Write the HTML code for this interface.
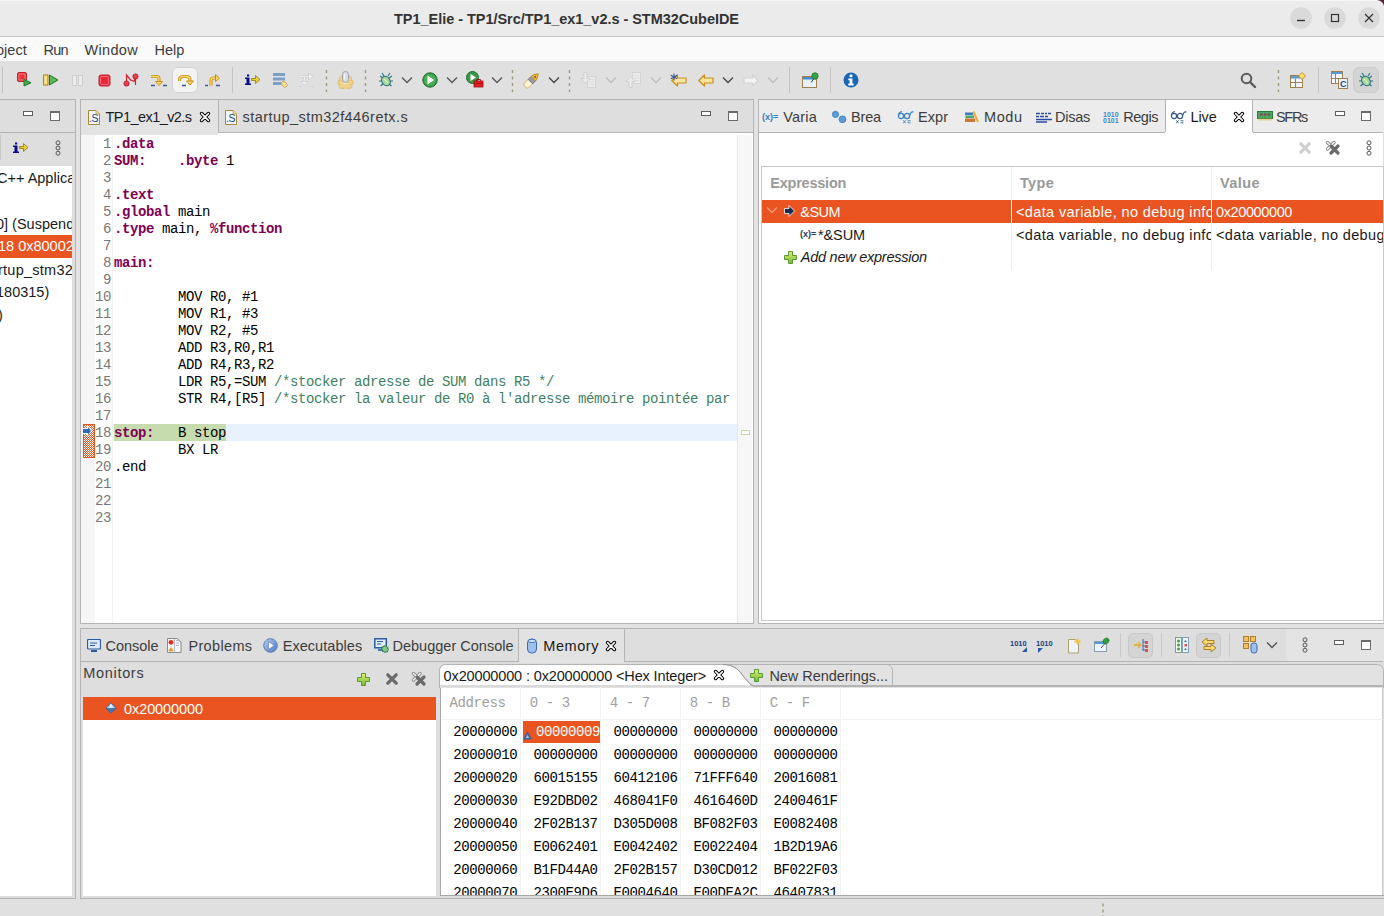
<!DOCTYPE html><html><head><meta charset="utf-8"><style>
html,body{margin:0;padding:0;width:1384px;height:916px;overflow:hidden;background:#e2e2e2}
div{position:absolute;box-sizing:border-box}
body{position:relative;font-family:"Liberation Sans",sans-serif}
</style></head><body>
<div style="left:0px;top:0px;width:1384px;height:916px;background:#e2e2e2"></div>
<div style="left:0px;top:0px;width:1384px;height:36px;background:#ebebeb"></div>
<div style="left:0px;top:36px;width:1384px;height:1px;background:#c4c4c4"></div>
<div style="left:394px;top:9.18px;font-size:14.5px;line-height:20px;color:#333;font-family:'Liberation Sans', sans-serif;white-space:pre;font-weight:bold;letter-spacing:-0.034px;">TP1_Elie - TP1/Src/TP1_ex1_v2.s - STM32CubeIDE</div>
<svg style="position:absolute;left:1290px;top:7px" width="22" height="22" viewBox="0 0 22 22"><circle cx="11" cy="11" r="10.8" fill="#dadada"/><path d="M7 13.5h8" stroke="#333" stroke-width="1.4"/></svg>
<svg style="position:absolute;left:1324px;top:7px" width="22" height="22" viewBox="0 0 22 22"><circle cx="11" cy="11" r="10.8" fill="#dadada"/><rect x="7.5" y="7.5" width="7" height="7" fill="none" stroke="#333" stroke-width="1.2"/></svg>
<svg style="position:absolute;left:1358px;top:7px" width="22" height="22" viewBox="0 0 22 22"><circle cx="11" cy="11" r="10.8" fill="#dadada"/><path d="M7 7l8 8M15 7l-8 8" stroke="#333" stroke-width="1.2"/></svg>
<div style="left:0px;top:0px;width:1384px;height:1px;background:#f6f6f6"></div>
<svg style="position:absolute;left:1374px;top:0px" width="10" height="10" viewBox="0 0 10 10"><path d="M3 0H10V6Q9 1.2 3 0Z" fill="#5e1e40"/></svg>
<div style="left:0px;top:37px;width:1384px;height:24px;background:#fafafa"></div>
<div style="left:-4px;top:39.78px;font-size:14.5px;line-height:20px;color:#3c3c3c;font-family:'Liberation Sans', sans-serif;white-space:pre;letter-spacing:0.015px;">oject</div>
<div style="left:43.4px;top:39.78px;font-size:14.5px;line-height:20px;color:#3c3c3c;font-family:'Liberation Sans', sans-serif;white-space:pre;letter-spacing:-0.698px;">Run</div>
<div style="left:84.5px;top:39.78px;font-size:14.5px;line-height:20px;color:#3c3c3c;font-family:'Liberation Sans', sans-serif;white-space:pre;letter-spacing:0.323px;">Window</div>
<div style="left:154.6px;top:39.78px;font-size:14.5px;line-height:20px;color:#3c3c3c;font-family:'Liberation Sans', sans-serif;white-space:pre;letter-spacing:-0.053px;">Help</div>
<div style="left:0px;top:61px;width:1384px;height:38px;background:#e0e0e0"></div>
<div style="left:-2px;top:99px;width:78px;height:800px;background:#dedede;border:1px solid #b4b4b4;box-sizing:border-box"></div>
<div style="left:0px;top:132px;width:75px;height:1px;background:#b4b4b4"></div>
<div style="left:0px;top:166px;width:72px;height:730px;background:#fff"></div>
<div style="left:80px;top:99px;width:674px;height:525px;background:#dedede;border:1px solid #b4b4b4;box-sizing:border-box"></div>
<div style="left:81px;top:132px;width:672px;height:1px;background:#b4b4b4"></div>
<div style="left:81px;top:133px;width:672px;height:490px;background:#fff"></div>
<div style="left:758px;top:99px;width:628px;height:525px;background:#dedede;border:1px solid #b4b4b4;box-sizing:border-box"></div>
<div style="left:759px;top:132px;width:624px;height:1px;background:#b4b4b4"></div>
<div style="left:759px;top:133px;width:624px;height:490px;background:#fff"></div>
<div style="left:80px;top:628px;width:1306px;height:271px;background:#dedede;border:1px solid #b4b4b4;box-sizing:border-box"></div>
<div style="left:81px;top:661px;width:1302px;height:1px;background:#b4b4b4"></div>
<div style="left:81px;top:100px;width:137px;height:35px;background:#e3e3e3"></div>
<div style="left:218px;top:100px;width:1px;height:33px;background:#b4b4b4"></div>
<div style="left:219px;top:132px;width:534px;height:1px;background:#b4b4b4"></div>
<div style="left:81px;top:135px;width:672px;height:488px;background:#fff"></div>
<svg style="position:absolute;left:88px;top:110px" width="12" height="15" viewBox="0 0 12 15"><path d="M0.5 0.5H8L11.5 4V14.5H0.5Z" fill="#f2f6fb" stroke="#a8883a" stroke-width="1"/><path d="M8 0.5V4H11.5" fill="#f0d890" stroke="#c8a850" stroke-width="0.8"/><text x="1" y="11.8" font-family="Liberation Sans" font-size="10.5" fill="#1f3f78" letter-spacing="-0.5">.S</text></svg>
<div style="left:105.5px;top:107.28px;font-size:14.5px;line-height:20px;color:#1a1a1a;font-family:'Liberation Sans', sans-serif;white-space:pre;letter-spacing:-0.557px;">TP1_ex1_v2.s</div>
<svg style="position:absolute;left:199px;top:111px" width="12" height="12" viewBox="0 0 12 12"><path d="M2.6 2.6L9.4 9.4M9.4 2.6L2.6 9.4" stroke="#000" stroke-width="3.6" stroke-linecap="round"/><path d="M2.6 2.6L9.4 9.4M9.4 2.6L2.6 9.4" stroke="#fff" stroke-width="1.5" stroke-linecap="round"/></svg>
<svg style="position:absolute;left:225px;top:110px" width="12" height="15" viewBox="0 0 12 15"><path d="M0.5 0.5H8L11.5 4V14.5H0.5Z" fill="#f2f6fb" stroke="#a8883a" stroke-width="1"/><path d="M8 0.5V4H11.5" fill="#f0d890" stroke="#c8a850" stroke-width="0.8"/><text x="1" y="11.8" font-family="Liberation Sans" font-size="10.5" fill="#1f3f78" letter-spacing="-0.5">.S</text></svg>
<div style="left:242.6px;top:107.28px;font-size:14.5px;line-height:20px;color:#3c3c3c;font-family:'Liberation Sans', sans-serif;white-space:pre;letter-spacing:0.437px;">startup_stm32f446retx.s</div>
<div style="left:701px;top:111px;width:10px;height:5px;background:#fff;border:1px solid #5e5e5e"></div>
<div style="left:728px;top:111px;width:10px;height:10px;background:#fff;border:1px solid #6a6a6a;border-top-width:2px"></div>
<div style="left:81px;top:135px;width:14px;height:488px;background:#f6f6f6"></div>
<div style="left:112px;top:135px;width:1px;height:488px;background:#f3f3f3"></div>
<div style="left:737px;top:135px;width:1px;height:488px;background:#e6e6e6"></div>
<div style="left:738px;top:135px;width:14px;height:488px;background:#f7f7f7"></div>
<div style="left:741px;top:430px;width:9px;height:5px;background:#fff;border:1px solid #c0dca8"></div>
<div style="left:113px;top:424px;width:624px;height:17px;background:#e8f2fe"></div>
<div style="left:114px;top:424px;width:112px;height:17px;background:#c7dcae"></div>
<svg style="position:absolute;left:83px;top:424px" width="12" height="35" viewBox="0 0 12 35"><defs><pattern id="chk" width="2" height="2" patternUnits="userSpaceOnUse"><rect width="2" height="2" fill="#fff"/><rect width="1" height="1" fill="#e95420"/><rect x="1" y="1" width="1" height="1" fill="#e95420"/></pattern></defs><rect x="0.5" y="0.5" width="11" height="33" fill="url(#chk)" stroke="#e95420"/><path d="M0 4H4V1L9 7L4 13V10H0Z" fill="#fff"/><path d="M0 5H5V3L8 7L5 11V9H0Z" fill="#2a6bb8"/></svg>
<div style="left:103.0px;top:135.27px;font-size:14px;line-height:18px;color:#787878;font-family:'Liberation Mono', monospace;white-space:pre;letter-spacing:-0.400px;">1</div>
<div style="left:114px;top:135.27px;font-size:14px;line-height:18px;color:#7f0055;font-family:'Liberation Mono', monospace;white-space:pre;font-weight:bold;letter-spacing:-0.400px;">.data</div>
<div style="left:103.0px;top:152.27px;font-size:14px;line-height:18px;color:#787878;font-family:'Liberation Mono', monospace;white-space:pre;letter-spacing:-0.400px;">2</div>
<div style="left:114px;top:152.27px;font-size:14px;line-height:18px;color:#7f0055;font-family:'Liberation Mono', monospace;white-space:pre;font-weight:bold;letter-spacing:-0.400px;">SUM:</div>
<div style="left:146.0px;top:152.27px;font-size:14px;line-height:18px;color:#000;font-family:'Liberation Mono', monospace;white-space:pre;letter-spacing:-0.400px;">    </div>
<div style="left:178.0px;top:152.27px;font-size:14px;line-height:18px;color:#7f0055;font-family:'Liberation Mono', monospace;white-space:pre;font-weight:bold;letter-spacing:-0.400px;">.byte</div>
<div style="left:218.0px;top:152.27px;font-size:14px;line-height:18px;color:#000;font-family:'Liberation Mono', monospace;white-space:pre;letter-spacing:-0.400px;"> 1</div>
<div style="left:103.0px;top:169.27px;font-size:14px;line-height:18px;color:#787878;font-family:'Liberation Mono', monospace;white-space:pre;letter-spacing:-0.400px;">3</div>
<div style="left:103.0px;top:186.27px;font-size:14px;line-height:18px;color:#787878;font-family:'Liberation Mono', monospace;white-space:pre;letter-spacing:-0.400px;">4</div>
<div style="left:114px;top:186.27px;font-size:14px;line-height:18px;color:#7f0055;font-family:'Liberation Mono', monospace;white-space:pre;font-weight:bold;letter-spacing:-0.400px;">.text</div>
<div style="left:103.0px;top:203.27px;font-size:14px;line-height:18px;color:#787878;font-family:'Liberation Mono', monospace;white-space:pre;letter-spacing:-0.400px;">5</div>
<div style="left:114px;top:203.27px;font-size:14px;line-height:18px;color:#7f0055;font-family:'Liberation Mono', monospace;white-space:pre;font-weight:bold;letter-spacing:-0.400px;">.global</div>
<div style="left:170.0px;top:203.27px;font-size:14px;line-height:18px;color:#000;font-family:'Liberation Mono', monospace;white-space:pre;letter-spacing:-0.400px;"> main</div>
<div style="left:103.0px;top:220.27px;font-size:14px;line-height:18px;color:#787878;font-family:'Liberation Mono', monospace;white-space:pre;letter-spacing:-0.400px;">6</div>
<div style="left:114px;top:220.27px;font-size:14px;line-height:18px;color:#7f0055;font-family:'Liberation Mono', monospace;white-space:pre;font-weight:bold;letter-spacing:-0.400px;">.type</div>
<div style="left:154.0px;top:220.27px;font-size:14px;line-height:18px;color:#000;font-family:'Liberation Mono', monospace;white-space:pre;letter-spacing:-0.400px;"> main, </div>
<div style="left:210.0px;top:220.27px;font-size:14px;line-height:18px;color:#7f0055;font-family:'Liberation Mono', monospace;white-space:pre;font-weight:bold;letter-spacing:-0.400px;">%function</div>
<div style="left:103.0px;top:237.27px;font-size:14px;line-height:18px;color:#787878;font-family:'Liberation Mono', monospace;white-space:pre;letter-spacing:-0.400px;">7</div>
<div style="left:103.0px;top:254.27px;font-size:14px;line-height:18px;color:#787878;font-family:'Liberation Mono', monospace;white-space:pre;letter-spacing:-0.400px;">8</div>
<div style="left:114px;top:254.27px;font-size:14px;line-height:18px;color:#7f0055;font-family:'Liberation Mono', monospace;white-space:pre;font-weight:bold;letter-spacing:-0.400px;">main:</div>
<div style="left:103.0px;top:271.27px;font-size:14px;line-height:18px;color:#787878;font-family:'Liberation Mono', monospace;white-space:pre;letter-spacing:-0.400px;">9</div>
<div style="left:95.0px;top:288.27px;font-size:14px;line-height:18px;color:#787878;font-family:'Liberation Mono', monospace;white-space:pre;letter-spacing:-0.400px;">10</div>
<div style="left:114px;top:288.27px;font-size:14px;line-height:18px;color:#000;font-family:'Liberation Mono', monospace;white-space:pre;letter-spacing:-0.400px;">        MOV R0, #1</div>
<div style="left:95.0px;top:305.27px;font-size:14px;line-height:18px;color:#787878;font-family:'Liberation Mono', monospace;white-space:pre;letter-spacing:-0.400px;">11</div>
<div style="left:114px;top:305.27px;font-size:14px;line-height:18px;color:#000;font-family:'Liberation Mono', monospace;white-space:pre;letter-spacing:-0.400px;">        MOV R1, #3</div>
<div style="left:95.0px;top:322.27px;font-size:14px;line-height:18px;color:#787878;font-family:'Liberation Mono', monospace;white-space:pre;letter-spacing:-0.400px;">12</div>
<div style="left:114px;top:322.27px;font-size:14px;line-height:18px;color:#000;font-family:'Liberation Mono', monospace;white-space:pre;letter-spacing:-0.400px;">        MOV R2, #5</div>
<div style="left:95.0px;top:339.27px;font-size:14px;line-height:18px;color:#787878;font-family:'Liberation Mono', monospace;white-space:pre;letter-spacing:-0.400px;">13</div>
<div style="left:114px;top:339.27px;font-size:14px;line-height:18px;color:#000;font-family:'Liberation Mono', monospace;white-space:pre;letter-spacing:-0.400px;">        ADD R3,R0,R1</div>
<div style="left:95.0px;top:356.27px;font-size:14px;line-height:18px;color:#787878;font-family:'Liberation Mono', monospace;white-space:pre;letter-spacing:-0.400px;">14</div>
<div style="left:114px;top:356.27px;font-size:14px;line-height:18px;color:#000;font-family:'Liberation Mono', monospace;white-space:pre;letter-spacing:-0.400px;">        ADD R4,R3,R2</div>
<div style="left:95.0px;top:373.27px;font-size:14px;line-height:18px;color:#787878;font-family:'Liberation Mono', monospace;white-space:pre;letter-spacing:-0.400px;">15</div>
<div style="left:114px;top:373.27px;font-size:14px;line-height:18px;color:#000;font-family:'Liberation Mono', monospace;white-space:pre;letter-spacing:-0.400px;">        LDR R5,=SUM </div>
<div style="left:274.0px;top:373.27px;font-size:14px;line-height:18px;color:#3f7f5f;font-family:'Liberation Mono', monospace;white-space:pre;letter-spacing:-0.400px;">/*stocker adresse de SUM dans R5 */</div>
<div style="left:95.0px;top:390.27px;font-size:14px;line-height:18px;color:#787878;font-family:'Liberation Mono', monospace;white-space:pre;letter-spacing:-0.400px;">16</div>
<div style="left:114px;top:390.27px;font-size:14px;line-height:18px;color:#000;font-family:'Liberation Mono', monospace;white-space:pre;letter-spacing:-0.400px;">        STR R4,[R5] </div>
<div style="left:274.0px;top:390.27px;font-size:14px;line-height:18px;color:#3f7f5f;font-family:'Liberation Mono', monospace;white-space:pre;letter-spacing:-0.400px;">/*stocker la valeur de R0 à l&#x27;adresse mémoire pointée par</div>
<div style="left:95.0px;top:407.27px;font-size:14px;line-height:18px;color:#787878;font-family:'Liberation Mono', monospace;white-space:pre;letter-spacing:-0.400px;">17</div>
<div style="left:95.0px;top:424.27px;font-size:14px;line-height:18px;color:#787878;font-family:'Liberation Mono', monospace;white-space:pre;letter-spacing:-0.400px;">18</div>
<div style="left:114px;top:424.27px;font-size:14px;line-height:18px;color:#7f0055;font-family:'Liberation Mono', monospace;white-space:pre;font-weight:bold;letter-spacing:-0.400px;">stop:</div>
<div style="left:154.0px;top:424.27px;font-size:14px;line-height:18px;color:#000;font-family:'Liberation Mono', monospace;white-space:pre;letter-spacing:-0.400px;">   B stop</div>
<div style="left:95.0px;top:441.27px;font-size:14px;line-height:18px;color:#787878;font-family:'Liberation Mono', monospace;white-space:pre;letter-spacing:-0.400px;">19</div>
<div style="left:114px;top:441.27px;font-size:14px;line-height:18px;color:#000;font-family:'Liberation Mono', monospace;white-space:pre;letter-spacing:-0.400px;">        BX LR</div>
<div style="left:95.0px;top:458.27px;font-size:14px;line-height:18px;color:#787878;font-family:'Liberation Mono', monospace;white-space:pre;letter-spacing:-0.400px;">20</div>
<div style="left:114px;top:458.27px;font-size:14px;line-height:18px;color:#000;font-family:'Liberation Mono', monospace;white-space:pre;letter-spacing:-0.400px;">.end</div>
<div style="left:95.0px;top:475.27px;font-size:14px;line-height:18px;color:#787878;font-family:'Liberation Mono', monospace;white-space:pre;letter-spacing:-0.400px;">21</div>
<div style="left:95.0px;top:492.27px;font-size:14px;line-height:18px;color:#787878;font-family:'Liberation Mono', monospace;white-space:pre;letter-spacing:-0.400px;">22</div>
<div style="left:95.0px;top:509.27px;font-size:14px;line-height:18px;color:#787878;font-family:'Liberation Mono', monospace;white-space:pre;letter-spacing:-0.400px;">23</div>
<div style="left:23px;top:111px;width:10px;height:5px;background:#fff;border:1px solid #5e5e5e"></div>
<div style="left:50px;top:111px;width:10px;height:10px;background:#fff;border:1px solid #6a6a6a;border-top-width:2px"></div>
<div style="left:0px;top:135px;width:1px;height:25px;background:#c8c8c8"></div>
<svg style="position:absolute;left:12px;top:141px" width="17" height="13" viewBox="0 0 17 13"><path d="M3 1.5h2.2v2H3z" fill="#0a0a8c"/><path d="M1 4.5h4.5v6h1.5v1.5H1v-1.5h1.5v-4.5H1z" fill="#0a0a8c"/><path d="M7.5 5.5h4v-3l4.5 4-4.5 4v-3h-4z" fill="#e8d038" stroke="#8a7a10" stroke-width="0.8"/></svg>
<svg style="position:absolute;left:55px;top:140px" width="6" height="16" viewBox="0 0 6 16"><circle cx="3" cy="2.8" r="2" fill="none" stroke="#555" stroke-width="1"/><circle cx="3" cy="8" r="2" fill="none" stroke="#555" stroke-width="1"/><circle cx="3" cy="13.2" r="2" fill="none" stroke="#555" stroke-width="1"/></svg>
<div style="left:0;top:166px;width:72px;height:730px;overflow:hidden">
<div style="left:0px;top:69px;width:72px;height:23px;background:#e95420"></div>
<div style="left:-3px;top:2.48px;font-size:14.5px;line-height:20px;color:#1a1a1a;font-family:'Liberation Sans', sans-serif;white-space:pre;">C++ Applica</div>
<div style="left:-4px;top:47.98px;font-size:14.5px;line-height:20px;color:#1a1a1a;font-family:'Liberation Sans', sans-serif;white-space:pre;">0] (Suspend</div>
<div style="left:-2px;top:70.48px;font-size:14.5px;line-height:20px;color:#fff;font-family:'Liberation Sans', sans-serif;white-space:pre;">18 0x80002</div>
<div style="left:-2px;top:93.98px;font-size:14.5px;line-height:20px;color:#1a1a1a;font-family:'Liberation Sans', sans-serif;white-space:pre;letter-spacing:0.247px;">rtup_stm32</div>
<div style="left:-4px;top:116.48px;font-size:14.5px;line-height:20px;color:#1a1a1a;font-family:'Liberation Sans', sans-serif;white-space:pre;">180315)</div>
<div style="left:-2px;top:139.48px;font-size:14.5px;line-height:20px;color:#1a1a1a;font-family:'Liberation Sans', sans-serif;white-space:pre;">)</div>
</div>
<div style="left:759px;top:100px;width:625px;height:32px;background:#ececec"></div>
<div style="left:1165px;top:100px;width:88px;height:33px;background:#fff"></div>
<div style="left:1165px;top:100px;width:1px;height:32px;background:#b4b4b4"></div>
<div style="left:1252px;top:100px;width:1px;height:32px;background:#b4b4b4"></div>
<div style="left:759px;top:132px;width:406px;height:1px;background:#b4b4b4"></div>
<div style="left:1253px;top:132px;width:130px;height:1px;background:#b4b4b4"></div>
<div style="left:1166px;top:132px;width:86px;height:1px;background:#fff"></div>
<svg style="position:absolute;left:762px;top:111px" width="18" height="12" viewBox="0 0 18 12"><text x="0" y="8.5" font-family="Liberation Sans" font-weight="bold" font-size="9" fill="#2f7fc8">(x)=</text></svg>
<div style="left:783.2px;top:106.78px;font-size:14.5px;line-height:20px;color:#3c3c3c;font-family:'Liberation Sans', sans-serif;white-space:pre;letter-spacing:0.207px;">Varia</div>
<svg style="position:absolute;left:832px;top:110px" width="15" height="14" viewBox="0 0 15 14"><circle cx="3.5" cy="4.4" r="3.1" fill="#5c9cd8" stroke="#3a7ab8" stroke-width="0.8"/><circle cx="10.5" cy="9.3" r="3.4" fill="#5c9cd8" stroke="#3a7ab8" stroke-width="0.8"/></svg>
<div style="left:851px;top:106.78px;font-size:14.5px;line-height:20px;color:#3c3c3c;font-family:'Liberation Sans', sans-serif;white-space:pre;letter-spacing:-0.156px;">Brea</div>
<svg style="position:absolute;left:897px;top:110px" width="17" height="15" viewBox="0 0 17 15"><circle cx="4" cy="6" r="2.6" fill="none" stroke="#2f7fc8" stroke-width="1.2"/><circle cx="10" cy="6" r="2.6" fill="none" stroke="#2f7fc8" stroke-width="1.2"/><path d="M6.6 5.5Q7 4.8 7.4 5.5M1.4 6Q1.5 2 5 1.5M12.6 5.5L14 2.5Q15 1.5 16.5 2" fill="none" stroke="#2f7fc8" stroke-width="1.1"/><path d="M6.2 10.3l2.4 2.9M8.6 10.3L6.2 13.2M10.5 10.8h3M10.5 12.8h3" stroke="#2f7fc8" stroke-width="0.9"/></svg>
<div style="left:918px;top:106.78px;font-size:14.5px;line-height:20px;color:#3c3c3c;font-family:'Liberation Sans', sans-serif;white-space:pre;letter-spacing:0.047px;">Expr</div>
<svg style="position:absolute;left:964px;top:110px" width="16" height="13" viewBox="0 0 16 13"><rect x="1" y="2.5" width="8" height="2.5" fill="#3a7ac8"/><rect x="1.5" y="5.5" width="8.5" height="2.5" fill="#48a868"/><rect x="1" y="8.5" width="10" height="3.5" fill="#c8783a"/><path d="M9.5 1.5L14 12" stroke="#e8b030" stroke-width="2"/></svg>
<div style="left:984px;top:106.78px;font-size:14.5px;line-height:20px;color:#3c3c3c;font-family:'Liberation Sans', sans-serif;white-space:pre;letter-spacing:0.559px;">Modu</div>
<svg style="position:absolute;left:1035px;top:111px" width="17" height="12" viewBox="0 0 17 12"><path d="M1 2.5h4M6 2.5h3M10 2.5h2M13 2.5h3M1 5.5h3M5 5.5h4M10 5.5h3M1 8.5h16M1 11h11" stroke="#2a4aa8" stroke-width="1.3"/></svg>
<div style="left:1055px;top:106.78px;font-size:14.5px;line-height:20px;color:#3c3c3c;font-family:'Liberation Sans', sans-serif;white-space:pre;letter-spacing:-0.250px;">Disas</div>
<svg style="position:absolute;left:1103px;top:110px" width="16" height="14" viewBox="0 0 16 14"><text x="0" y="6.5" font-family="Liberation Sans" font-weight="bold" font-size="7" fill="#3a88c8">1010</text><text x="0" y="13" font-family="Liberation Sans" font-weight="bold" font-size="7" fill="#3a88c8">0101</text></svg>
<div style="left:1123.3px;top:106.78px;font-size:14.5px;line-height:20px;color:#3c3c3c;font-family:'Liberation Sans', sans-serif;white-space:pre;letter-spacing:-0.492px;">Regis</div>
<svg style="position:absolute;left:1170px;top:110px" width="17" height="15" viewBox="0 0 17 15"><circle cx="4" cy="6" r="2.6" fill="none" stroke="#3a5a80" stroke-width="1.2"/><circle cx="10" cy="6" r="2.6" fill="none" stroke="#3a5a80" stroke-width="1.2"/><path d="M6.6 5.5Q7 4.8 7.4 5.5M1.4 6Q1.5 2 5 1.5M12.6 5.5L14 2.5Q15 1.5 16.5 2" fill="none" stroke="#3a5a80" stroke-width="1.1"/><path d="M6.2 10.3l2.4 2.9M8.6 10.3L6.2 13.2M10.5 10.8h3M10.5 12.8h3" stroke="#3a5a80" stroke-width="0.9"/></svg>
<div style="left:1190.4px;top:106.78px;font-size:14.5px;line-height:20px;color:#1a1a1a;font-family:'Liberation Sans', sans-serif;white-space:pre;letter-spacing:-0.073px;">Live</div>
<svg style="position:absolute;left:1233px;top:111px" width="12" height="12" viewBox="0 0 12 12"><path d="M2.6 2.6L9.4 9.4M9.4 2.6L2.6 9.4" stroke="#000" stroke-width="3.6" stroke-linecap="round"/><path d="M2.6 2.6L9.4 9.4M9.4 2.6L2.6 9.4" stroke="#fff" stroke-width="1.5" stroke-linecap="round"/></svg>
<svg style="position:absolute;left:1257px;top:111px" width="16" height="11" viewBox="0 0 16 11"><rect x="0.5" y="0.5" width="15" height="7" fill="#48a860" stroke="#2a7a3a" stroke-width="1"/><rect x="3" y="2.5" width="2.5" height="2" fill="#8a3a5a"/><rect x="6.8" y="2.5" width="2.5" height="2" fill="#8a3a5a"/><rect x="10.6" y="2.5" width="2.5" height="2" fill="#8a3a5a"/><path d="M1.5 8.5h13" stroke="#e0c050" stroke-width="2.2" stroke-dasharray="1.2 0.8"/></svg>
<div style="left:1276px;top:106.78px;font-size:14.5px;line-height:20px;color:#3c3c3c;font-family:'Liberation Sans', sans-serif;white-space:pre;letter-spacing:-1.312px;">SFRs</div>
<div style="left:1335px;top:111px;width:10px;height:5px;background:#fff;border:1px solid #5e5e5e"></div>
<div style="left:1361px;top:111px;width:10px;height:10px;background:#fff;border:1px solid #6a6a6a;border-top-width:2px"></div>
<svg style="position:absolute;left:1298px;top:141px" width="14" height="14" viewBox="0 0 14 14"><path d="M2.8 2.8L11.2 11.2M11.2 2.8L2.8 11.2" stroke="#cfcfcf" stroke-width="3.2" stroke-linecap="round"/></svg>
<svg style="position:absolute;left:1325px;top:140px" width="16" height="16" viewBox="0 0 16 16"><path d="M2.5 2.5L9 9M9 2.5L2.5 9" stroke="#8a8a8a" stroke-width="3.4" stroke-linecap="round"/><path d="M2.5 2.5L9 9M9 2.5L2.5 9" stroke="#f4f4f4" stroke-width="1.6" stroke-linecap="round"/><path d="M6 6L13 13M13 6L6 13" stroke="#6a6a6a" stroke-width="3.2" stroke-linecap="round"/></svg>
<svg style="position:absolute;left:1366px;top:140px" width="6" height="16" viewBox="0 0 6 16"><circle cx="3" cy="2.8" r="2" fill="none" stroke="#555" stroke-width="1"/><circle cx="3" cy="8" r="2" fill="none" stroke="#555" stroke-width="1"/><circle cx="3" cy="13.2" r="2" fill="none" stroke="#555" stroke-width="1"/></svg>
<div style="left:761px;top:166px;width:623px;height:455px;border:1px solid #c8c8c8;background:#fff"></div>
<div style="left:1011px;top:167px;width:1px;height:103px;background:#ececec"></div>
<div style="left:1211px;top:167px;width:1px;height:103px;background:#ececec"></div>
<div style="left:770.2px;top:172.78px;font-size:14.5px;line-height:20px;color:#9a9a9a;font-family:'Liberation Sans', sans-serif;white-space:pre;font-weight:bold;letter-spacing:-0.217px;">Expression</div>
<div style="left:1020px;top:172.78px;font-size:14.5px;line-height:20px;color:#9a9a9a;font-family:'Liberation Sans', sans-serif;white-space:pre;font-weight:bold;letter-spacing:0.309px;">Type</div>
<div style="left:1220px;top:172.78px;font-size:14.5px;line-height:20px;color:#9a9a9a;font-family:'Liberation Sans', sans-serif;white-space:pre;font-weight:bold;letter-spacing:0.422px;">Value</div>
<div style="left:762px;top:200px;width:621px;height:23px;background:#e95420"></div>
<div style="left:1011px;top:200px;width:1px;height:23px;background:#fff"></div>
<svg style="position:absolute;left:766px;top:206px" width="12" height="8" viewBox="0 0 12 8"><path d="M1 1.5L6 6.5L11 1.5" fill="none" stroke="#f0a080" stroke-width="1.2"/></svg>
<svg style="position:absolute;left:784px;top:205px" width="11" height="12" viewBox="0 0 11 12"><path d="M0.5 3.5H5V0.5L10.5 6L5 11.5V8.5H0.5Z" fill="#1a2a50" stroke="#fff" stroke-width="0.8"/></svg>
<div style="left:800.3px;top:202.18px;font-size:14.5px;line-height:20px;color:#fff;font-family:'Liberation Sans', sans-serif;white-space:pre;letter-spacing:-0.548px;">&amp;SUM</div>
<div style="left:1211px;top:200px;width:1px;height:23px;background:#fff"></div>
<div style="left:1216px;top:202.18px;font-size:14.5px;line-height:20px;color:#fff;font-family:'Liberation Sans', sans-serif;white-space:pre;letter-spacing:-0.381px;">0x20000000</div>
<svg style="position:absolute;left:800px;top:228px" width="18" height="12" viewBox="0 0 18 12"><text x="0" y="8.5" font-family="Liberation Sans" font-weight="bold" font-size="9" fill="#2a3a60">(x)=</text></svg>
<div style="left:818px;top:224.78px;font-size:14.5px;line-height:20px;color:#1a1a1a;font-family:'Liberation Sans', sans-serif;white-space:pre;letter-spacing:-0.106px;">*&amp;SUM</div>
<div style="left:1012px;top:200px;width:199px;height:70px;overflow:hidden">
<div style="left:4px;top:2.18px;font-size:14.5px;line-height:20px;color:#fff;font-family:'Liberation Sans', sans-serif;white-space:pre;letter-spacing:0.370px;">&lt;data variable, no debug info&gt;</div>
<div style="left:4px;top:24.78px;font-size:14.5px;line-height:20px;color:#1a1a1a;font-family:'Liberation Sans', sans-serif;white-space:pre;letter-spacing:0.370px;">&lt;data variable, no debug info&gt;</div>
</div>
<div style="left:1212px;top:200px;width:171px;height:70px;overflow:hidden">
<div style="left:4px;top:24.78px;font-size:14.5px;line-height:20px;color:#1a1a1a;font-family:'Liberation Sans', sans-serif;white-space:pre;letter-spacing:0.370px;">&lt;data variable, no debug info&gt;</div>
</div>
<svg style="position:absolute;left:784px;top:251px" width="14" height="14" viewBox="0 0 14 14"><defs><linearGradient id="pg" x1="0" y1="0" x2="0" y2="1"><stop offset="0" stop-color="#e4f070"/><stop offset="1" stop-color="#70b838"/></linearGradient></defs><path d="M4.5 0.5h4v4h4v4h-4v4h-4v-4h-4v-4h4z" fill="url(#pg)" stroke="#5a9a30" stroke-width="1"/></svg>
<div style="left:800.8px;top:247.38px;font-size:14.5px;line-height:20px;color:#1a1a1a;font-family:'Liberation Sans', sans-serif;white-space:pre;font-style:italic;letter-spacing:-0.253px;">Add new expression</div>
<svg style="position:absolute;left:87px;top:639px" width="14" height="13" viewBox="0 0 14 13"><rect x="0.5" y="0.5" width="13" height="9.5" rx="1" fill="#dce8f8" stroke="#2a5aa0" stroke-width="1.2"/><path d="M3 4h7M3 6.5h5" stroke="#2a5aa0" stroke-width="1"/><path d="M4 12h6" stroke="#2a5aa0" stroke-width="2"/></svg>
<div style="left:105.6px;top:635.78px;font-size:14.5px;line-height:20px;color:#3c3c3c;font-family:'Liberation Sans', sans-serif;white-space:pre;letter-spacing:-0.027px;">Console</div>
<svg style="position:absolute;left:167px;top:638px" width="15" height="15" viewBox="0 0 15 15"><path d="M0.5 0.5h9.5l4 3.5v10.5H0.5z" fill="#f6f6f6" stroke="#8a8a8a" stroke-width="1"/><path d="M7.5 0.5v14" stroke="#a8a8a8" stroke-width="0.8"/><path d="M9 2.5h3M9 5h3M9 7.5h3" stroke="#9ab0c8" stroke-width="0.8"/><circle cx="4" cy="4.3" r="2.4" fill="#e42a2a"/><path d="M1.8 13L4 9.5L6.2 13z" fill="#f0a020" stroke="#c88010" stroke-width="0.5"/></svg>
<div style="left:188.4px;top:635.78px;font-size:14.5px;line-height:20px;color:#3c3c3c;font-family:'Liberation Sans', sans-serif;white-space:pre;letter-spacing:0.346px;">Problems</div>
<svg style="position:absolute;left:263px;top:638px" width="15" height="15" viewBox="0 0 15 15"><defs><linearGradient id="eg" x1="0" y1="0" x2="1" y2="1"><stop offset="0" stop-color="#b8d0f4"/><stop offset="1" stop-color="#4a78c0"/></linearGradient></defs><circle cx="7.5" cy="7.5" r="6.8" fill="url(#eg)" stroke="#5a7ab8" stroke-width="1"/><path d="M5.5 3.5L11.2 7.5L5.5 11.5z" fill="#fff" stroke="#4a6aa8" stroke-width="0.6"/></svg>
<div style="left:282.7px;top:635.78px;font-size:14.5px;line-height:20px;color:#3c3c3c;font-family:'Liberation Sans', sans-serif;white-space:pre;letter-spacing:0.047px;">Executables</div>
<svg style="position:absolute;left:374px;top:638px" width="15" height="15" viewBox="0 0 15 15"><rect x="0.8" y="0.8" width="11.5" height="9" fill="#e4eefa" stroke="#2a5aa0" stroke-width="1.5"/><path d="M3 3.5h6M3 6h4" stroke="#2a5aa0" stroke-width="1"/><path d="M4 12h4" stroke="#2a5aa0" stroke-width="1.6"/><ellipse cx="11" cy="11" rx="3" ry="3.4" transform="rotate(-40 11 11)" fill="#8ac880" stroke="#2a7a5a" stroke-width="0.9"/><path d="M7.5 9l1.5 1M14.5 9l-1.5 1M8 14l1.5-1M14 14l-1.5-1" stroke="#2a7a5a" stroke-width="0.8"/></svg>
<div style="left:392.5px;top:635.78px;font-size:14.5px;line-height:20px;color:#3c3c3c;font-family:'Liberation Sans', sans-serif;white-space:pre;letter-spacing:0.007px;">Debugger Console</div>
<div style="left:518px;top:629px;width:1px;height:33px;background:#b4b4b4"></div>
<div style="left:624px;top:629px;width:1px;height:33px;background:#b4b4b4"></div>
<div style="left:519px;top:629px;width:105px;height:34px;background:#e2e2e2"></div>
<svg style="position:absolute;left:527px;top:638px" width="10" height="16" viewBox="0 0 10 16"><rect x="0.5" y="1" width="9" height="14" rx="4" fill="#9ec0ea" stroke="#3a6ab0" stroke-width="1"/><ellipse cx="5" cy="3" rx="4" ry="1.6" fill="#d0e2f8" stroke="#3a6ab0" stroke-width="0.8"/></svg>
<div style="left:543.3px;top:635.78px;font-size:14.5px;line-height:20px;color:#1a1a1a;font-family:'Liberation Sans', sans-serif;white-space:pre;letter-spacing:0.557px;">Memory</div>
<svg style="position:absolute;left:605px;top:640px" width="12" height="12" viewBox="0 0 12 12"><path d="M2.6 2.6L9.4 9.4M9.4 2.6L2.6 9.4" stroke="#000" stroke-width="3.6" stroke-linecap="round"/><path d="M2.6 2.6L9.4 9.4M9.4 2.6L2.6 9.4" stroke="#fff" stroke-width="1.5" stroke-linecap="round"/></svg>
<div style="left:83.3px;top:663.38px;font-size:14.5px;line-height:20px;color:#3c3c3c;font-family:'Liberation Sans', sans-serif;white-space:pre;letter-spacing:0.676px;">Monitors</div>
<svg style="position:absolute;left:357px;top:673px" width="14" height="14" viewBox="0 0 14 14"><defs><linearGradient id="pg" x1="0" y1="0" x2="0" y2="1"><stop offset="0" stop-color="#e4f070"/><stop offset="1" stop-color="#70b838"/></linearGradient></defs><path d="M4.5 0.5h4v4h4v4h-4v4h-4v-4h-4v-4h4z" fill="url(#pg)" stroke="#5a9a30" stroke-width="1"/></svg>
<svg style="position:absolute;left:385px;top:672px" width="14" height="14" viewBox="0 0 14 14"><path d="M2.8 2.8L11.2 11.2M11.2 2.8L2.8 11.2" stroke="#6a6a6a" stroke-width="3.2" stroke-linecap="round"/></svg>
<svg style="position:absolute;left:411px;top:671px" width="16" height="16" viewBox="0 0 16 16"><path d="M2.5 2.5L9 9M9 2.5L2.5 9" stroke="#8a8a8a" stroke-width="3.4" stroke-linecap="round"/><path d="M2.5 2.5L9 9M9 2.5L2.5 9" stroke="#f4f4f4" stroke-width="1.6" stroke-linecap="round"/><path d="M6 6L13 13M13 6L6 13" stroke="#6a6a6a" stroke-width="3.2" stroke-linecap="round"/></svg>
<div style="left:83px;top:697px;width:353px;height:23px;background:#e95420"></div>
<div style="left:83px;top:720px;width:353px;height:176px;background:#fff"></div>
<svg style="position:absolute;left:105px;top:702px" width="12" height="12" viewBox="0 0 12 12"><path d="M6 0.8L11.2 6L6 11.2L0.8 6z" fill="#3a78b8" stroke="#2a5a98" stroke-width="0.6"/><path d="M6 1.5L10.5 6H1.5z" fill="#a8cff0"/><path d="M6 1.5L8 6H4z" fill="#e0f0ff"/></svg>
<div style="left:124px;top:698.58px;font-size:14.5px;line-height:20px;color:#fff;font-family:'Liberation Sans', sans-serif;white-space:pre;letter-spacing:-0.081px;">0x20000000</div>
<svg style="position:absolute;left:1010px;top:639px" width="18" height="14" viewBox="0 0 18 14"><text x="0" y="7" font-family="Liberation Sans" font-weight="bold" font-size="7.5" fill="#1f3f7f">1010</text><path d="M12 13H17V8z" fill="#2a5aa0"/></svg>
<svg style="position:absolute;left:1036px;top:639px" width="18" height="14" viewBox="0 0 18 14"><text x="0" y="7" font-family="Liberation Sans" font-weight="bold" font-size="7.5" fill="#1f3f7f">1010</text><path d="M2 9H7L2 14z" fill="#2a5aa0"/></svg>
<svg style="position:absolute;left:1066px;top:638px" width="15" height="16" viewBox="0 0 15 16"><path d="M2.5 1.5h7l3 3v10.5h-10z" fill="#eef4fc" stroke="#b0a070" stroke-width="1"/><path d="M11.5 0.5v6M8.5 3.5h6" stroke="#f0c840" stroke-width="1.8"/></svg>
<svg style="position:absolute;left:1093px;top:637px" width="17" height="16" viewBox="0 0 17 16"><rect x="1.5" y="4.5" width="12" height="10" fill="#eef4fc" stroke="#8a9ab0" stroke-width="1"/><rect x="2" y="5" width="11" height="2" fill="#4a9ae0"/><path d="M8 11l3.5-4" stroke="#404040" stroke-width="0.9"/><ellipse cx="13" cy="4" rx="3.3" ry="2.6" transform="rotate(-40 13 4)" fill="#30a040" stroke="#1a7a2a" stroke-width="0.7"/></svg>
<div style="left:1120px;top:633px;width:1px;height:24px;background:#c8c8c8"></div>
<div style="left:1128px;top:633px;width:25px;height:25px;background:#d4d4d4;border:1px solid #c8c8c8;border-radius:5px"></div>
<svg style="position:absolute;left:1133px;top:637px" width="16" height="16" viewBox="0 0 16 16"><path d="M1 8h6" stroke="#e0b040" stroke-width="1.8"/><path d="M5 5l3 3l-3 3" fill="none" stroke="#e0b040" stroke-width="1.5"/><path d="M10 2v12M10 5h4M10 9h4M10 13h4" stroke="#3a6ab0" stroke-width="1"/><rect x="12" y="4" width="3" height="3" fill="#e05050"/><rect x="12" y="8" width="3" height="3" fill="#e05050"/><rect x="12" y="12" width="3" height="3" fill="#e05050"/></svg>
<div style="left:1161px;top:633px;width:1px;height:24px;background:#c8c8c8"></div>
<svg style="position:absolute;left:1175px;top:637px" width="15" height="16" viewBox="0 0 15 16"><rect x="0.5" y="0.5" width="6" height="15" fill="#f4f4f4" stroke="#80a080" stroke-width="1"/><rect x="7.5" y="0.5" width="6" height="15" fill="#f4f4f4" stroke="#80a0c0" stroke-width="1"/><circle cx="3.5" cy="4" r="1.5" fill="#40a040"/><circle cx="3.5" cy="8" r="1.5" fill="#40a040"/><circle cx="3.5" cy="12" r="1.5" fill="#40a040"/><path d="M9 5l1.5-2l1.5 2zM9 13l1.5-2l1.5 2z" fill="#3a6ab0"/><rect x="9.5" y="7" width="2.5" height="2.5" fill="#e05050"/></svg>
<div style="left:1196px;top:633px;width:25px;height:25px;background:#d4d4d4;border:1px solid #c8c8c8;border-radius:5px"></div>
<svg style="position:absolute;left:1200px;top:636px" width="18" height="18" viewBox="0 0 18 18"><path d="M7 2L2 6L7 10V7.5H14V4.5H7z" fill="#f8d878" stroke="#b08020" stroke-width="1"/><path d="M11 8L16 12L11 16V13.5H4V10.5H11z" fill="#f8d878" stroke="#b08020" stroke-width="1"/></svg>
<div style="left:1229px;top:633px;width:1px;height:24px;background:#c8c8c8"></div>
<svg style="position:absolute;left:1243px;top:636px" width="16" height="18" viewBox="0 0 16 18"><rect x="0.5" y="0.5" width="5" height="5" fill="#f0c060" stroke="#b08030" stroke-width="1"/><rect x="7.5" y="0.5" width="5" height="5" fill="#f0c060" stroke="#b08030" stroke-width="1"/><rect x="0.5" y="7.5" width="5" height="5" fill="#f0c060" stroke="#b08030" stroke-width="1"/><rect x="8" y="7" width="6" height="10" rx="2.5" fill="#9ec0ea" stroke="#3a6ab0" stroke-width="1"/></svg>
<svg style="position:absolute;left:1266px;top:641px" width="12" height="8" viewBox="0 0 12 8"><path d="M1 1.5L6 6.5L11 1.5" fill="none" stroke="#505050" stroke-width="1.3"/></svg>
<div style="left:1286px;top:629px;width:98px;height:32px;background:#e4e4e4"></div>
<svg style="position:absolute;left:1302px;top:637px" width="6" height="16" viewBox="0 0 6 16"><circle cx="3" cy="2.8" r="2" fill="none" stroke="#555" stroke-width="1"/><circle cx="3" cy="8" r="2" fill="none" stroke="#555" stroke-width="1"/><circle cx="3" cy="13.2" r="2" fill="none" stroke="#555" stroke-width="1"/></svg>
<div style="left:1334px;top:640px;width:10px;height:5px;background:#fff;border:1px solid #5e5e5e"></div>
<div style="left:1361px;top:640px;width:10px;height:10px;background:#fff;border:1px solid #6a6a6a;border-top-width:2px"></div>
<div style="left:440px;top:687px;width:943px;height:208px;background:#fff;border-left:1px solid #a8a8a8;border-right:1px solid #c8c8c8"></div>
<div style="left:440px;top:895px;width:944px;height:1px;background:#a8a8a8"></div>
<svg style="position:absolute;left:439px;top:663px" width="945" height="25" viewBox="0 0 945 25"><path d="M0.5 25V7.5A6 6 0 0 1 6.5 1.5H938.5A6 6 0 0 1 944.5 7.5V25" fill="#e2e2e2" stroke="#b4b4b4" stroke-width="1"/><path d="M453.5 23V7.5A6 6 0 0 0 447.5 1.5" fill="none" stroke="#b4b4b4" stroke-width="1"/><path d="M0.5 23.5V7.5A6 6 0 0 1 6.5 1.5H283C297 1.5 300 8 305 14C309 19 311 22.5 315 23H0.5Z" fill="#fff" stroke="#b4b4b4" stroke-width="1"/><path d="M283 1.5C297 1.5 300 8 305 14C309 19 312 22.5 316 23" fill="none" stroke="#9a9a9a" stroke-width="1"/><path d="M314 23H945" stroke="#b4b4b4" stroke-width="2"/><path d="M1 23.5H314" stroke="#dadada" stroke-width="1"/></svg>
<div style="left:443.6px;top:666.48px;font-size:14.5px;line-height:20px;color:#1a1a1a;font-family:'Liberation Sans', sans-serif;white-space:pre;letter-spacing:-0.139px;">0x20000000 : 0x20000000 &lt;Hex Integer&gt;</div>
<svg style="position:absolute;left:713px;top:669px" width="12" height="12" viewBox="0 0 12 12"><path d="M2.6 2.6L9.4 9.4M9.4 2.6L2.6 9.4" stroke="#000" stroke-width="3.6" stroke-linecap="round"/><path d="M2.6 2.6L9.4 9.4M9.4 2.6L2.6 9.4" stroke="#fff" stroke-width="1.5" stroke-linecap="round"/></svg>
<svg style="position:absolute;left:749.5px;top:668.5px" width="14" height="14" viewBox="0 0 14 14"><defs><linearGradient id="pg" x1="0" y1="0" x2="0" y2="1"><stop offset="0" stop-color="#e4f070"/><stop offset="1" stop-color="#70b838"/></linearGradient></defs><path d="M4.5 0.5h4v4h4v4h-4v4h-4v-4h-4v-4h4z" fill="url(#pg)" stroke="#5a9a30" stroke-width="1"/></svg>
<div style="left:769.4px;top:666.48px;font-size:14.5px;line-height:20px;color:#3c3c3c;font-family:'Liberation Sans', sans-serif;white-space:pre;letter-spacing:-0.039px;">New Renderings...</div>
<div style="left:520px;top:687px;width:1px;height:208px;background:#f2f2f2"></div>
<div style="left:600px;top:687px;width:1px;height:208px;background:#f2f2f2"></div>
<div style="left:680px;top:687px;width:1px;height:208px;background:#f2f2f2"></div>
<div style="left:760px;top:687px;width:1px;height:208px;background:#f2f2f2"></div>
<div style="left:840px;top:687px;width:1px;height:208px;background:#f2f2f2"></div>
<div style="left:441px;top:719px;width:942px;height:1px;background:#f2f2f2"></div>
<div style="left:449.4px;top:694.27px;font-size:14px;line-height:18px;color:#a0a0a0;font-family:'Liberation Mono', monospace;white-space:pre;letter-spacing:-0.400px;">Address</div>
<div style="left:529.7px;top:694.27px;font-size:14px;line-height:18px;color:#a0a0a0;font-family:'Liberation Mono', monospace;white-space:pre;letter-spacing:-0.400px;">0 - 3</div>
<div style="left:609.7px;top:694.27px;font-size:14px;line-height:18px;color:#a0a0a0;font-family:'Liberation Mono', monospace;white-space:pre;letter-spacing:-0.400px;">4 - 7</div>
<div style="left:689.7px;top:694.27px;font-size:14px;line-height:18px;color:#a0a0a0;font-family:'Liberation Mono', monospace;white-space:pre;letter-spacing:-0.400px;">8 - B</div>
<div style="left:769.7px;top:694.27px;font-size:14px;line-height:18px;color:#a0a0a0;font-family:'Liberation Mono', monospace;white-space:pre;letter-spacing:-0.400px;">C - F</div>
<div style="left:523px;top:721px;width:77px;height:22px;background:#e95420"></div>
<div style="left:441px;top:720px;width:942px;height:175px;overflow:hidden">
<div style="left:12.300000000000011px;top:2.87px;font-size:14px;line-height:18px;color:#000;font-family:'Liberation Mono', monospace;white-space:pre;letter-spacing:-0.400px;">20000000</div>
<div style="left:172.60000000000002px;top:2.87px;font-size:14px;line-height:18px;color:#000;font-family:'Liberation Mono', monospace;white-space:pre;letter-spacing:-0.400px;">00000000</div>
<div style="left:252.60000000000002px;top:2.87px;font-size:14px;line-height:18px;color:#000;font-family:'Liberation Mono', monospace;white-space:pre;letter-spacing:-0.400px;">00000000</div>
<div style="left:332.6px;top:2.87px;font-size:14px;line-height:18px;color:#000;font-family:'Liberation Mono', monospace;white-space:pre;letter-spacing:-0.400px;">00000000</div>
<div style="left:12.300000000000011px;top:25.87px;font-size:14px;line-height:18px;color:#000;font-family:'Liberation Mono', monospace;white-space:pre;letter-spacing:-0.400px;">20000010</div>
<div style="left:92.60000000000002px;top:25.87px;font-size:14px;line-height:18px;color:#000;font-family:'Liberation Mono', monospace;white-space:pre;letter-spacing:-0.400px;">00000000</div>
<div style="left:172.60000000000002px;top:25.87px;font-size:14px;line-height:18px;color:#000;font-family:'Liberation Mono', monospace;white-space:pre;letter-spacing:-0.400px;">00000000</div>
<div style="left:252.60000000000002px;top:25.87px;font-size:14px;line-height:18px;color:#000;font-family:'Liberation Mono', monospace;white-space:pre;letter-spacing:-0.400px;">00000000</div>
<div style="left:332.6px;top:25.87px;font-size:14px;line-height:18px;color:#000;font-family:'Liberation Mono', monospace;white-space:pre;letter-spacing:-0.400px;">00000000</div>
<div style="left:12.300000000000011px;top:48.87px;font-size:14px;line-height:18px;color:#000;font-family:'Liberation Mono', monospace;white-space:pre;letter-spacing:-0.400px;">20000020</div>
<div style="left:92.60000000000002px;top:48.87px;font-size:14px;line-height:18px;color:#000;font-family:'Liberation Mono', monospace;white-space:pre;letter-spacing:-0.400px;">60015155</div>
<div style="left:172.60000000000002px;top:48.87px;font-size:14px;line-height:18px;color:#000;font-family:'Liberation Mono', monospace;white-space:pre;letter-spacing:-0.400px;">60412106</div>
<div style="left:252.60000000000002px;top:48.87px;font-size:14px;line-height:18px;color:#000;font-family:'Liberation Mono', monospace;white-space:pre;letter-spacing:-0.400px;">71FFF640</div>
<div style="left:332.6px;top:48.87px;font-size:14px;line-height:18px;color:#000;font-family:'Liberation Mono', monospace;white-space:pre;letter-spacing:-0.400px;">20016081</div>
<div style="left:12.300000000000011px;top:71.87px;font-size:14px;line-height:18px;color:#000;font-family:'Liberation Mono', monospace;white-space:pre;letter-spacing:-0.400px;">20000030</div>
<div style="left:92.60000000000002px;top:71.87px;font-size:14px;line-height:18px;color:#000;font-family:'Liberation Mono', monospace;white-space:pre;letter-spacing:-0.400px;">E92DBD02</div>
<div style="left:172.60000000000002px;top:71.87px;font-size:14px;line-height:18px;color:#000;font-family:'Liberation Mono', monospace;white-space:pre;letter-spacing:-0.400px;">468041F0</div>
<div style="left:252.60000000000002px;top:71.87px;font-size:14px;line-height:18px;color:#000;font-family:'Liberation Mono', monospace;white-space:pre;letter-spacing:-0.400px;">4616460D</div>
<div style="left:332.6px;top:71.87px;font-size:14px;line-height:18px;color:#000;font-family:'Liberation Mono', monospace;white-space:pre;letter-spacing:-0.400px;">2400461F</div>
<div style="left:12.300000000000011px;top:94.87px;font-size:14px;line-height:18px;color:#000;font-family:'Liberation Mono', monospace;white-space:pre;letter-spacing:-0.400px;">20000040</div>
<div style="left:92.60000000000002px;top:94.87px;font-size:14px;line-height:18px;color:#000;font-family:'Liberation Mono', monospace;white-space:pre;letter-spacing:-0.400px;">2F02B137</div>
<div style="left:172.60000000000002px;top:94.87px;font-size:14px;line-height:18px;color:#000;font-family:'Liberation Mono', monospace;white-space:pre;letter-spacing:-0.400px;">D305D008</div>
<div style="left:252.60000000000002px;top:94.87px;font-size:14px;line-height:18px;color:#000;font-family:'Liberation Mono', monospace;white-space:pre;letter-spacing:-0.400px;">BF082F03</div>
<div style="left:332.6px;top:94.87px;font-size:14px;line-height:18px;color:#000;font-family:'Liberation Mono', monospace;white-space:pre;letter-spacing:-0.400px;">E0082408</div>
<div style="left:12.300000000000011px;top:117.87px;font-size:14px;line-height:18px;color:#000;font-family:'Liberation Mono', monospace;white-space:pre;letter-spacing:-0.400px;">20000050</div>
<div style="left:92.60000000000002px;top:117.87px;font-size:14px;line-height:18px;color:#000;font-family:'Liberation Mono', monospace;white-space:pre;letter-spacing:-0.400px;">E0062401</div>
<div style="left:172.60000000000002px;top:117.87px;font-size:14px;line-height:18px;color:#000;font-family:'Liberation Mono', monospace;white-space:pre;letter-spacing:-0.400px;">E0042402</div>
<div style="left:252.60000000000002px;top:117.87px;font-size:14px;line-height:18px;color:#000;font-family:'Liberation Mono', monospace;white-space:pre;letter-spacing:-0.400px;">E0022404</div>
<div style="left:332.6px;top:117.87px;font-size:14px;line-height:18px;color:#000;font-family:'Liberation Mono', monospace;white-space:pre;letter-spacing:-0.400px;">1B2D19A6</div>
<div style="left:12.300000000000011px;top:140.87px;font-size:14px;line-height:18px;color:#000;font-family:'Liberation Mono', monospace;white-space:pre;letter-spacing:-0.400px;">20000060</div>
<div style="left:92.60000000000002px;top:140.87px;font-size:14px;line-height:18px;color:#000;font-family:'Liberation Mono', monospace;white-space:pre;letter-spacing:-0.400px;">B1FD44A0</div>
<div style="left:172.60000000000002px;top:140.87px;font-size:14px;line-height:18px;color:#000;font-family:'Liberation Mono', monospace;white-space:pre;letter-spacing:-0.400px;">2F02B157</div>
<div style="left:252.60000000000002px;top:140.87px;font-size:14px;line-height:18px;color:#000;font-family:'Liberation Mono', monospace;white-space:pre;letter-spacing:-0.400px;">D30CD012</div>
<div style="left:332.6px;top:140.87px;font-size:14px;line-height:18px;color:#000;font-family:'Liberation Mono', monospace;white-space:pre;letter-spacing:-0.400px;">BF022F03</div>
<div style="left:12.300000000000011px;top:163.87px;font-size:14px;line-height:18px;color:#000;font-family:'Liberation Mono', monospace;white-space:pre;letter-spacing:-0.400px;">20000070</div>
<div style="left:92.60000000000002px;top:163.87px;font-size:14px;line-height:18px;color:#000;font-family:'Liberation Mono', monospace;white-space:pre;letter-spacing:-0.400px;">2300E9D6</div>
<div style="left:172.60000000000002px;top:163.87px;font-size:14px;line-height:18px;color:#000;font-family:'Liberation Mono', monospace;white-space:pre;letter-spacing:-0.400px;">E0004640</div>
<div style="left:252.60000000000002px;top:163.87px;font-size:14px;line-height:18px;color:#000;font-family:'Liberation Mono', monospace;white-space:pre;letter-spacing:-0.400px;">E00DEA2C</div>
<div style="left:332.6px;top:163.87px;font-size:14px;line-height:18px;color:#000;font-family:'Liberation Mono', monospace;white-space:pre;letter-spacing:-0.400px;">46407831</div>
</div>
<div style="left:523px;top:721px;width:77px;height:22px;overflow:hidden">
<div style="left:13px;top:1.87px;font-size:14px;line-height:18px;color:#fff;font-family:'Liberation Mono', monospace;white-space:pre;letter-spacing:-0.400px;">00000009</div>
</div>
<svg style="position:absolute;left:523px;top:731px" width="9" height="9" viewBox="0 0 9 9"><path d="M4.5 1L8 8H1z" fill="#3a78c0" stroke="#2a5aa0" stroke-width="0.8"/><path d="M4.5 4L6 7H3z" fill="#a8c8f0"/></svg>
<div style="left:0px;top:899px;width:1384px;height:17px;background:#e0e0e0"></div>
<svg style="position:absolute;left:1101px;top:903px" width="4" height="13" viewBox="0 0 4 13"><path d="M2 0.5v3M2 6.5v3M2 12.5v3" stroke="#a09a80" stroke-width="1.4"/></svg>
<div style="left:2px;top:67px;width:1px;height:26px;background:#c4c4c4"></div>
<svg style="position:absolute;left:16px;top:71px" width="17" height="17" viewBox="0 0 17 17"><rect x="1.5" y="1.5" width="9" height="9" rx="1.5" fill="#e8303a" stroke="#c02028" stroke-width="1"/><rect x="3" y="3" width="6" height="6" fill="none" stroke="#ff9090" stroke-width="0.8"/><path d="M8 8.5L15 11.8L8 15z" fill="#4aa84a" stroke="#1a7a2a" stroke-width="1"/></svg>
<svg style="position:absolute;left:42px;top:74px" width="17" height="12" viewBox="0 0 17 12"><rect x="1.5" y="1" width="4.5" height="10" fill="#f8e080" stroke="#b08010" stroke-width="1"/><path d="M7.5 1L16 6L7.5 11z" fill="#5ab85a" stroke="#1a7a2a" stroke-width="1"/></svg>
<svg style="position:absolute;left:71px;top:74px" width="14" height="13" viewBox="0 0 14 13"><rect x="1.5" y="1.5" width="4" height="10" fill="#ececec" stroke="#cfcfcf" stroke-width="1"/><rect x="7.5" y="1.5" width="4" height="10" fill="#ececec" stroke="#cfcfcf" stroke-width="1"/></svg>
<svg style="position:absolute;left:98px;top:74px" width="13" height="13" viewBox="0 0 13 13"><rect x="1" y="1" width="11" height="11" rx="2" fill="#e8283a" stroke="#c02030" stroke-width="1"/><rect x="2.5" y="2.5" width="8" height="8" rx="1" fill="none" stroke="#ff8a8a" stroke-width="0.7"/></svg>
<svg style="position:absolute;left:123px;top:73px" width="16" height="14" viewBox="0 0 16 14"><path d="M3.5 10.5L3.5 2L8 7.5M7 6.5L11 8.5L12.5 4L12.5 12" fill="none" stroke="#d02030" stroke-width="1.2"/><circle cx="3.5" cy="10.5" r="2.6" fill="#e84050" stroke="#b01020" stroke-width="0.8"/><circle cx="12.5" cy="3.5" r="2.6" fill="#e84050" stroke="#b01020" stroke-width="0.8"/></svg>
<svg style="position:absolute;left:150px;top:74px" width="18" height="13" viewBox="0 0 18 13"><path d="M1 2.5H6.5Q9 2.5 9 5V8" fill="none" stroke="#c89010" stroke-width="3"/><path d="M1 2.5H6.5Q9 2.5 9 5V8" fill="none" stroke="#f8d870" stroke-width="1.3"/><path d="M5.5 7.5L9 11.5L12.5 7.5z" fill="#f8d870" stroke="#c89010" stroke-width="1"/><path d="M1 11.5h4M13 11.5h4" stroke="#3a5a98" stroke-width="1.6"/></svg>
<div style="left:172px;top:67px;width:26px;height:26px;background:#f3f3f3;border:1px solid #d2d2d2;border-radius:6px"></div>
<svg style="position:absolute;left:177px;top:74px" width="17" height="13" viewBox="0 0 17 13"><path d="M2.5 7V5.5Q2.5 2.5 6.5 2.5H9.5Q13 2.5 13 6V7.5" fill="none" stroke="#c89010" stroke-width="3"/><path d="M2.5 7V5.5Q2.5 2.5 6.5 2.5H9.5Q13 2.5 13 6V7.5" fill="none" stroke="#f8d870" stroke-width="1.3"/><path d="M9.5 7L13 11L16.5 7z" fill="#f8d870" stroke="#c89010" stroke-width="1"/><path d="M5 11.5h4" stroke="#3a5a98" stroke-width="1.6"/></svg>
<svg style="position:absolute;left:204px;top:74px" width="17" height="13" viewBox="0 0 17 13"><path d="M7 11.5V6.5Q7 4 9.5 4H12" fill="none" stroke="#c89010" stroke-width="3"/><path d="M7 11.5V6.5Q7 4 9.5 4H12" fill="none" stroke="#f8d870" stroke-width="1.3"/><path d="M11.5 0.5L15.5 4L11.5 7.5z" fill="#f8d870" stroke="#c89010" stroke-width="1"/><path d="M1 11.5h3M12 11.5h4" stroke="#3a5a98" stroke-width="1.6"/></svg>
<div style="left:232px;top:67px;width:1px;height:26px;background:#c4c4c4"></div>
<svg style="position:absolute;left:244px;top:73px" width="17" height="13" viewBox="0 0 17 13"><path d="M3 1.5h2.2v2H3z" fill="#0a0a8c"/><path d="M1 4.5h4.5v6h1.5v1.5H1v-1.5h1.5v-4.5H1z" fill="#0a0a8c"/><path d="M7.5 5.5h4v-3l4.5 4-4.5 4v-3h-4z" fill="#e8d038" stroke="#8a7a10" stroke-width="0.8"/></svg>
<svg style="position:absolute;left:272px;top:72px" width="17" height="17" viewBox="0 0 17 17"><rect x="1" y="1" width="12" height="3" fill="#7aa0c8"/><rect x="1" y="5.5" width="12" height="3" fill="#7aa0c8"/><rect x="1" y="10" width="8" height="3" fill="#7aa0c8"/><path d="M9 11Q11 8 13 10L15.5 12.5Q15 15 12.5 15.5L10 13z" fill="#f4dca0" stroke="#c8a050" stroke-width="0.9"/></svg>
<svg style="position:absolute;left:298px;top:72px" width="18" height="16" viewBox="0 0 18 16"><path d="M2 4.5H11" stroke="#d2d2d2" stroke-width="2.4"/><path d="M2 4.5H11" stroke="#f2f2f2" stroke-width="0.9"/><path d="M10.5 1L15 4.5L10.5 8z" fill="#f2f2f2" stroke="#d2d2d2" stroke-width="1"/><path d="M6.5 4.5V10" stroke="#d2d2d2" stroke-width="2.4"/><path d="M6.5 4.5V10" stroke="#f2f2f2" stroke-width="0.9"/><path d="M3 9.5L6.5 13.5L10 9.5z" fill="#f2f2f2" stroke="#d2d2d2" stroke-width="1"/><path d="M0.5 14.5h3M13 14.5h3" stroke="#d2d2d2" stroke-width="1.4"/></svg>
<svg style="position:absolute;left:325px;top:70px" width="3" height="22" viewBox="0 0 3 22"><path d="M1.5 0V22" stroke="#a09a80" stroke-width="1.4" stroke-dasharray="3 3.5"/></svg>
<svg style="position:absolute;left:337px;top:71px" width="17" height="18" viewBox="0 0 17 18"><g transform="translate(8.5 11)"><path d="M-1.6 -7h3.2l0.6 2.2l2-1.2l2.3 2.3l-1.2 2l2.2 0.6v3.2l-2.2 0.6l1.2 2l-2.3 2.3l-2-1.2l-0.6 2.2h-3.2l-0.6-2.2l-2 1.2l-2.3-2.3l1.2-2l-2.2-0.6v-3.2l2.2-0.6l-1.2-2l2.3-2.3l2 1.2z" fill="#ecd48a" stroke="#d8b860" stroke-width="0.8"/><circle r="2.2" fill="#f8ecc0"/></g><rect x="5.5" y="0.5" width="6" height="11" rx="3" fill="#dcdce4" stroke="#a0a0a8" stroke-width="1"/><path d="M7.5 2.5v6" stroke="#f4f4f8" stroke-width="1.2"/></svg>
<svg style="position:absolute;left:364px;top:70px" width="3" height="22" viewBox="0 0 3 22"><path d="M1.5 0V22" stroke="#a09a80" stroke-width="1.4" stroke-dasharray="3 3.5"/></svg>
<svg style="position:absolute;left:378px;top:72px" width="16" height="16" viewBox="0 0 16 16"><path d="M2 4l3 2M14 4l-3 2M1 9h3M15 9h-3M2.5 14l3-2.5M13.5 14l-3-2.5M4 1l2 3M12 1l-2 3" stroke="#2a7a8a" stroke-width="1.2"/><ellipse cx="8" cy="9" rx="4" ry="5" transform="rotate(-35 8 9)" fill="#a8d8a0" stroke="#2a6a7a" stroke-width="1.1"/><path d="M6 7l4 4" stroke="#e8f8e0" stroke-width="1"/></svg>
<svg style="position:absolute;left:401px;top:76px" width="12" height="8" viewBox="0 0 12 8"><path d="M1 1.5L6 6.5L11 1.5" fill="none" stroke="#555" stroke-width="1.3"/></svg>
<svg style="position:absolute;left:422px;top:72px" width="16" height="16" viewBox="0 0 16 16"><circle cx="8" cy="8" r="7.2" fill="#3a9a4a" stroke="#1a6a2a" stroke-width="1"/><circle cx="8" cy="8" r="5.8" fill="#4aae58"/><path d="M5.5 3.5L12 8L5.5 12.5z" fill="#fff"/></svg>
<svg style="position:absolute;left:446px;top:76px" width="12" height="8" viewBox="0 0 12 8"><path d="M1 1.5L6 6.5L11 1.5" fill="none" stroke="#555" stroke-width="1.3"/></svg>
<svg style="position:absolute;left:466px;top:71px" width="18" height="17" viewBox="0 0 18 17"><circle cx="6.5" cy="6.5" r="6" fill="#3a9a4a" stroke="#1a6a2a" stroke-width="1"/><path d="M4.5 3L10 6.5L4.5 10z" fill="#fff"/><rect x="8" y="10" width="9" height="6" fill="#e02020" stroke="#a01010" stroke-width="0.8"/><path d="M10.5 10V8.5h4V10M8 12.5h9" stroke="#a01010" stroke-width="0.9" fill="none"/></svg>
<svg style="position:absolute;left:491px;top:76px" width="12" height="8" viewBox="0 0 12 8"><path d="M1 1.5L6 6.5L11 1.5" fill="none" stroke="#555" stroke-width="1.3"/></svg>
<svg style="position:absolute;left:511px;top:70px" width="3" height="22" viewBox="0 0 3 22"><path d="M1.5 0V22" stroke="#a09a80" stroke-width="1.4" stroke-dasharray="3 3.5"/></svg>
<svg style="position:absolute;left:523px;top:72px" width="17" height="17" viewBox="0 0 17 17"><g transform="translate(8.5 8.5) rotate(45)"><path d="M-3.2 1.5H3.2V7A3.2 2 0 0 1 -3.2 7Z" fill="#fbf4d8" stroke="#d8b060" stroke-width="0.9"/><rect x="-3.2" y="-2.5" width="6.4" height="4" fill="#9a9aa8" stroke="#707080" stroke-width="0.8"/><path d="M-3.2 -2.5L-2.5 -6L0 -9.5L2.5 -6L3.2 -2.5Z" fill="#f0b830" stroke="#b88a20" stroke-width="0.9"/><circle cx="0" cy="-5" r="0.9" fill="#2a4a98"/></g></svg>
<svg style="position:absolute;left:548px;top:76px" width="12" height="8" viewBox="0 0 12 8"><path d="M1 1.5L6 6.5L11 1.5" fill="none" stroke="#444" stroke-width="1.3"/></svg>
<svg style="position:absolute;left:568px;top:70px" width="3" height="22" viewBox="0 0 3 22"><path d="M1.5 0V22" stroke="#a09a80" stroke-width="1.4" stroke-dasharray="3 3.5"/></svg>
<svg style="position:absolute;left:581px;top:72px" width="16" height="16" viewBox="0 0 16 16"><rect x="6.5" y="4.5" width="8" height="11" fill="#eaeaea" stroke="#d4d4d4" stroke-width="1"/><path d="M3 0.5h3v6h3l-4.5 5l-4.5-5h3z" fill="#ececec" stroke="#cfcfcf" stroke-width="1"/><path d="M8 7.5h5M8 10h5M8 12.5h5" stroke="#d8d8d8" stroke-width="0.8"/></svg>
<svg style="position:absolute;left:605px;top:76px" width="12" height="8" viewBox="0 0 12 8"><path d="M1 1.5L6 6.5L11 1.5" fill="none" stroke="#bdbdbd" stroke-width="1.3"/></svg>
<svg style="position:absolute;left:626px;top:72px" width="16" height="16" viewBox="0 0 16 16"><rect x="6.5" y="0.5" width="8" height="11" fill="#eaeaea" stroke="#d4d4d4" stroke-width="1"/><path d="M3 15.5h3v-6h3l-4.5-5l-4.5 5h3z" fill="#ececec" stroke="#cfcfcf" stroke-width="1"/><path d="M8 3.5h5M8 6h5M8 8.5h5" stroke="#d8d8d8" stroke-width="0.8"/></svg>
<svg style="position:absolute;left:650px;top:76px" width="12" height="8" viewBox="0 0 12 8"><path d="M1 1.5L6 6.5L11 1.5" fill="none" stroke="#bdbdbd" stroke-width="1.3"/></svg>
<svg style="position:absolute;left:671px;top:74px" width="16" height="13" viewBox="0 0 16 13"><path d="M0.8 6.5L6.5 1V4H15V9H6.5V12z" fill="#fbe3a0" stroke="#c8901a" stroke-width="1.2" stroke-linejoin="round"/></svg>
<svg style="position:absolute;left:670px;top:73px" width="8" height="8" viewBox="0 0 8 8"><path d="M4 0.5v7M0.8 2.2l6.4 3.6M0.8 5.8l6.4-3.6" stroke="#3a5a98" stroke-width="1.1"/></svg>
<svg style="position:absolute;left:698px;top:74px" width="16" height="13" viewBox="0 0 16 13"><path d="M0.8 6.5L6.5 1V4H15V9H6.5V12z" fill="#fbe3a0" stroke="#c8901a" stroke-width="1.2" stroke-linejoin="round"/></svg>
<svg style="position:absolute;left:722px;top:76px" width="12" height="8" viewBox="0 0 12 8"><path d="M1 1.5L6 6.5L11 1.5" fill="none" stroke="#444" stroke-width="1.3"/></svg>
<svg style="position:absolute;left:743px;top:74px" width="16" height="13" viewBox="0 0 16 13"><path d="M15.2 6.5L9.5 1V4H1V9H9.5V12z" fill="#f2f2f2" stroke="#d4d4d4" stroke-width="1.2" stroke-linejoin="round"/></svg>
<svg style="position:absolute;left:767px;top:76px" width="12" height="8" viewBox="0 0 12 8"><path d="M1 1.5L6 6.5L11 1.5" fill="none" stroke="#bdbdbd" stroke-width="1.3"/></svg>
<div style="left:789px;top:67px;width:1px;height:26px;background:#c4c4c4"></div>
<svg style="position:absolute;left:801px;top:72px" width="18" height="17" viewBox="0 0 18 17"><rect x="1.5" y="4.5" width="14" height="11" fill="#e8f2fb" stroke="#a08050" stroke-width="1"/><rect x="2" y="5" width="13" height="2.5" fill="#4a8ad0"/><path d="M10 10.5l3-4" stroke="#3a3a3a" stroke-width="1"/><circle cx="14" cy="4" r="3.2" fill="#3aa04a" stroke="#1a7a2a" stroke-width="0.8"/></svg>
<div style="left:830px;top:67px;width:1px;height:26px;background:#c4c4c4"></div>
<svg style="position:absolute;left:843px;top:72px" width="16" height="16" viewBox="0 0 16 16"><circle cx="8" cy="8" r="7.5" fill="#1a66b4"/><rect x="6.6" y="2.6" width="2.8" height="2.6" fill="#fff"/><path d="M5.3 6.4h4.1v5.2h1.3v1.8H5.3v-1.8h1.3V8.2H5.3z" fill="#fff"/></svg>
<svg style="position:absolute;left:1240px;top:72px" width="17" height="17" viewBox="0 0 17 17"><circle cx="6.5" cy="6.5" r="4.8" fill="none" stroke="#5a5a5a" stroke-width="2"/><path d="M10 10L15 15" stroke="#5a5a5a" stroke-width="2.4" stroke-linecap="round"/></svg>
<svg style="position:absolute;left:1277px;top:70px" width="3" height="22" viewBox="0 0 3 22"><path d="M1.5 0V22" stroke="#a09a80" stroke-width="1.4" stroke-dasharray="3 3.5"/></svg>
<svg style="position:absolute;left:1290px;top:72px" width="16" height="16" viewBox="0 0 16 16"><rect x="0.5" y="3.5" width="12" height="12" fill="#f4f8fc" stroke="#a08050" stroke-width="1"/><rect x="1" y="4" width="11" height="2.5" fill="#5a9ad8"/><path d="M5.5 6.5v9M0.5 10.5h12" stroke="#a08050" stroke-width="1"/><path d="M12 0.5L15.5 4L12 7.5L8.5 4z" fill="#f8e070" stroke="#c89020" stroke-width="1"/></svg>
<div style="left:1318px;top:67px;width:1px;height:26px;background:#c4c4c4"></div>
<svg style="position:absolute;left:1331px;top:71px" width="17" height="18" viewBox="0 0 17 18"><rect x="0.5" y="0.5" width="11" height="12" fill="#f4f8fc" stroke="#a08050" stroke-width="1"/><rect x="1" y="1" width="10" height="2" fill="#5a9ad8"/><path d="M4.5 3v9.5M0.5 7.5h11" stroke="#a08050" stroke-width="1"/><rect x="7.5" y="7.5" width="9" height="10" fill="#e8f0fa" stroke="#a08050" stroke-width="1"/><text x="9" y="16" font-family="Liberation Sans" font-weight="bold" font-size="9" fill="#1f4e8c">C</text></svg>
<div style="left:1353px;top:67px;width:26px;height:26px;background:#d4d4d4;border:1px solid #cccccc;border-radius:6px"></div>
<svg style="position:absolute;left:1358px;top:72px" width="16" height="16" viewBox="0 0 16 16"><path d="M2 4l3 2M14 4l-3 2M1 9h3M15 9h-3M2.5 14l3-2.5M13.5 14l-3-2.5M4 1l2 3M12 1l-2 3" stroke="#2a7a8a" stroke-width="1.2"/><ellipse cx="8" cy="9" rx="4" ry="5" transform="rotate(-35 8 9)" fill="#a8d8a0" stroke="#2a6a7a" stroke-width="1.1"/><path d="M6 7l4 4" stroke="#e8f8e0" stroke-width="1"/></svg>
</body></html>
